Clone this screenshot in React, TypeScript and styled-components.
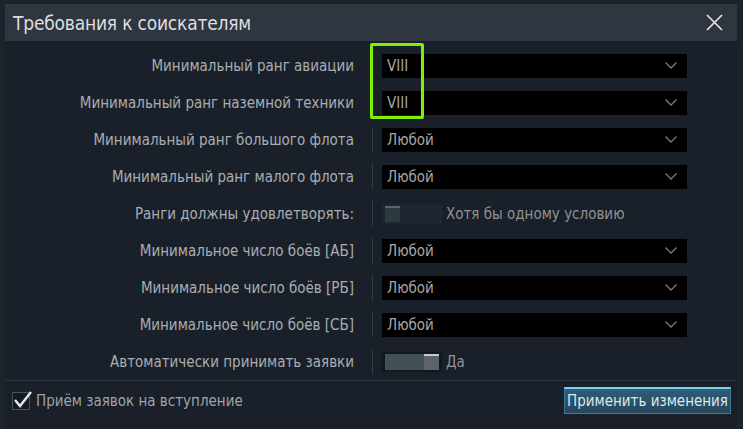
import React from 'react';
import styled, { createGlobalStyle } from 'styled-components';

const GlobalStyle = createGlobalStyle`
  html, body {
    margin: 0;
    padding: 0;
    background: #1d232b;
  }
  body {
    font-family: "DejaVu Sans Condensed", "Liberation Sans Narrow", Roboto, sans-serif;
    font-stretch: condensed;
  }
`;

const Dialog = styled.div`
  box-sizing: border-box;
  width: 732px;
  height: 425px;
  margin: 4px 0 0 5px;
  display: flex;
  flex-direction: column;
  background: #19202a;
`;

const TitleBar = styled.div`
  height: 37px;
  display: flex;
  align-items: center;
  justify-content: space-between;
  padding: 0 13px 0 8px;
  background: #2f363f;
`;

const Title = styled.div`
  color: #dcdee0;
  font-size: 19px;
  letter-spacing: -0.2px;
  white-space: nowrap;
`;

const Close = styled.button`
  width: 20px;
  height: 20px;
  padding: 0;
  border: 0;
  background: none;
  display: flex;
  align-items: center;
  justify-content: center;
`;

const Body = styled.div`
  padding-top: 6px;
  display: flex;
  flex-direction: column;
`;

const Row = styled.div`
  height: 37px;
  display: flex;
  align-items: center;
`;

const Label = styled.div`
  width: 349px;
  text-align: right;
  color: #a9adb1;
  font-size: 15px;
`;

const Sep = styled.div`
  width: 1px;
  height: 25px;
  margin: 0 9px 0 18px;
  background: #353d46;
`;

const Select = styled.div`
  width: 305px;
  height: 24px;
  box-sizing: border-box;
  padding: 0 10px 0 5px;
  background: #000;
  display: flex;
  align-items: center;
  justify-content: space-between;
  color: #a6a6a6;
  font-size: 15px;
`;

const Highlight = styled.div`
  position: absolute;
  left: 370px;
  top: 43px;
  width: 54px;
  height: 76px;
  box-sizing: border-box;
  border: 3px solid #7ff000;
  border-radius: 2px;
  pointer-events: none;
`;

const Toggle = styled.div<{ on?: boolean }>`
  width: 60px;
  height: 20px;
  box-sizing: border-box;
  padding: 2px 3px;
  background: ${p => (p.on ? '#111820' : '#1e2730')};
  display: flex;
`;

const Fill = styled.div`
  width: 39px;
  background: #425156;
`;

const Knob = styled.div<{ on?: boolean }>`
  width: 15px;
  box-sizing: border-box;
  border-top: 2px solid ${p => (p.on ? '#c9c9c9' : '#56666c')};
  background: ${p => (p.on ? '#5d636a' : '#2d3b41')};
`;

const ToggleText = styled.span`
  margin-left: 4px;
  color: #8d9296;
  font-size: 15px;
`;

const Divider = styled.div`
  height: 1px;
  background: #2c343d;
`;

const Footer = styled.div`
  flex: 1;
  display: flex;
  align-items: center;
  justify-content: space-between;
  padding: 0 6px 9px 7px;
`;

const Check = styled.label`
  display: flex;
  align-items: center;
  gap: 6px;
  color: #9ea3a7;
  font-size: 15px;
`;

const Box = styled.div`
  position: relative;
  width: 18px;
  height: 18px;
  box-sizing: border-box;
  border: 1px solid #4a5159;
  background: #151b22;
`;

const Tick = styled.svg`
  position: absolute;
  left: 0;
  top: -4px;
`;

const Apply = styled.button`
  width: 167px;
  height: 27px;
  box-sizing: border-box;
  border: 1px solid #3e7a96;
  border-top: 2px solid #70d6f2;
  background: linear-gradient(#2f5d78, #27475c);
  color: #dce6ec;
  font-family: inherit;
  font-size: 15px;
  padding: 0;
`;

function Chevron() {
  return (
    <svg width="12" height="7" viewBox="0 0 12 7">
      <path d="M0.5 0.5 L6 6 L11.5 0.5" fill="none" stroke="#7c7c7c" strokeWidth="1.3" />
    </svg>
  );
}

const selects = [
  ['Минимальный ранг авиации', 'VIII'],
  ['Минимальный ранг наземной техники', 'VIII'],
  ['Минимальный ранг большого флота', 'Любой'],
  ['Минимальный ранг малого флота', 'Любой'],
];

const battles = [
  ['Минимальное число боёв [АБ]', 'Любой'],
  ['Минимальное число боёв [РБ]', 'Любой'],
  ['Минимальное число боёв [СБ]', 'Любой'],
];

export default function App() {
  return (
    <>
      <GlobalStyle />
      <Dialog>
        <TitleBar>
          <Title>Требования к соискателям</Title>
          <Close>
            <svg width="17" height="17" viewBox="0 0 17 17">
              <path d="M1 1 L16 16 M16 1 L1 16" stroke="#e8e8e8" strokeWidth="1.6" />
            </svg>
          </Close>
        </TitleBar>
        <Body>
          {selects.map(([label, value], idx) => (
            <Row key={idx}>
              <Label>{label}</Label>
              <Sep />
              <Select>
                {value}
                <Chevron />
              </Select>
            </Row>
          ))}
          <Row>
            <Label>Ранги должны удовлетворять:</Label>
            <Sep />
            <Toggle>
              <Knob />
            </Toggle>
            <ToggleText>Хотя бы одному условию</ToggleText>
          </Row>
          {battles.map(([label, value], idx) => (
            <Row key={idx}>
              <Label>{label}</Label>
              <Sep />
              <Select>
                {value}
                <Chevron />
              </Select>
            </Row>
          ))}
          <Row>
            <Label>Автоматически принимать заявки</Label>
            <Sep />
            <Toggle on>
              <Fill />
              <Knob on />
            </Toggle>
            <ToggleText>Да</ToggleText>
          </Row>
        </Body>
        <Divider />
        <Footer>
          <Check>
            <Box>
              <Tick width="20" height="20" viewBox="0 0 20 20">
                <path d="M2 11 L7 17 L18 3" fill="none" stroke="#e6e6e6" strokeWidth="2.4" />
              </Tick>
            </Box>
            Приём заявок на вступление
          </Check>
          <Apply>Применить изменения</Apply>
        </Footer>
      </Dialog>
      <Highlight />
    </>
  );
}
